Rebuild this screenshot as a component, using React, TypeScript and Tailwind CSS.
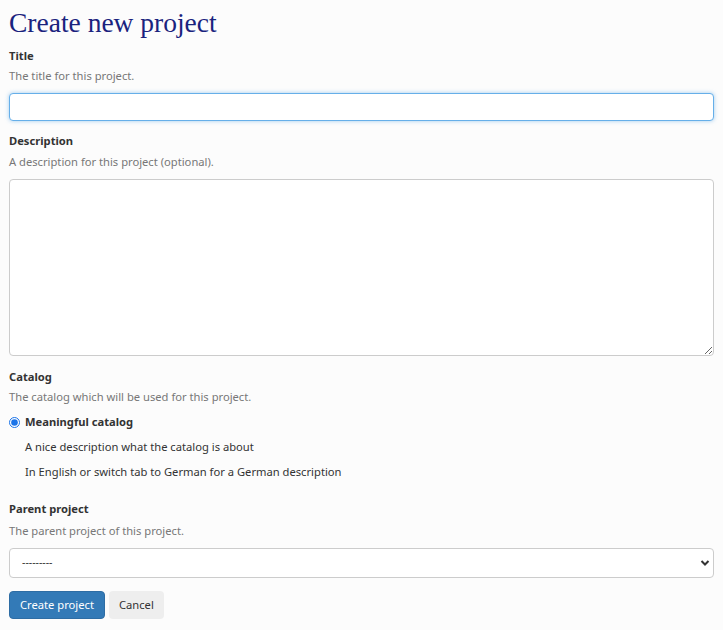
import React from "react";

export default function App() {
  return (
    <div className="min-h-[630px] bg-[#fcfcfc] px-[9px] pt-[6px] text-[#333] [font-family:'Noto_Sans','Open_Sans',sans-serif] text-[11.2px]">
      <h1 className="text-[27.5px] leading-[34px] text-[#1a237e] [font-family:'Liberation_Serif',serif] mb-[7px]">
        Create new project
      </h1>

      <div className="mb-[11px]">
        <label className="block font-bold leading-[18px]">Title</label>
        <p className="text-[#777] leading-[18px] mt-[2px]">The title for this project.</p>
        <input
          type="text"
          className="mt-[8px] block w-full h-[28px] rounded-[4px] border border-[#66afe9] bg-white px-2 outline-none shadow-[0_0_4px_rgba(102,175,233,0.6)]"
        />
      </div>

      <div className="mb-[12px]">
        <label className="block font-bold leading-[18px]">Description</label>
        <p className="text-[#777] leading-[18px] mt-[3px]">A description for this project (optional).</p>
        <textarea className="mt-[8px] block w-full h-[177px] rounded-[4px] border border-[#ccc] bg-white px-2 outline-none" />
      </div>

      <div className="mb-[19px]">
        <label className="block font-bold leading-[18px]">Catalog</label>
        <p className="text-[#777] leading-[18px] mt-[2px]">The catalog which will be used for this project.</p>
        <div className="mt-[7px] flex items-center">
          <input type="radio" defaultChecked className="m-0 w-[11px] h-[11px] accent-[#1a73e8]" />
          <span className="ml-[5px] font-bold leading-[18px]">Meaningful catalog</span>
        </div>
        <p className="ml-[16px] mt-[7px] leading-[18px]">A nice description what the catalog is about</p>
        <p className="ml-[16px] mt-[7px] leading-[18px]">In English or switch tab to German for a German description</p>
      </div>

      <div className="mb-[13px]">
        <label className="block font-bold leading-[18px]">Parent project</label>
        <p className="text-[#777] leading-[18px] mt-[4px]">The parent project of this project.</p>
        <div className="relative mt-[8px]">
          <select className="block w-full h-[30px] rounded-[4px] border border-[#ccc] bg-white pl-[12px] pr-8 appearance-none outline-none text-[10.5px]">
            <option>---------</option>
          </select>
          <svg className="pointer-events-none absolute right-[4px] top-[11px]" width="10" height="8" viewBox="0 0 10 8">
            <path d="M1.5 2 L5 5.5 L8.5 2" fill="none" stroke="#333" strokeWidth="2" />
          </svg>
        </div>
      </div>

      <div className="flex gap-[4px]">
        <button className="h-[28px] rounded-[4px] bg-[#337ab7] border border-[#2e6da4] px-[10px] text-white">Create project</button>
        <button className="h-[28px] rounded-[4px] bg-[#eeeeee] px-[10px] text-[#333]">Cancel</button>
      </div>
    </div>
  );
}
